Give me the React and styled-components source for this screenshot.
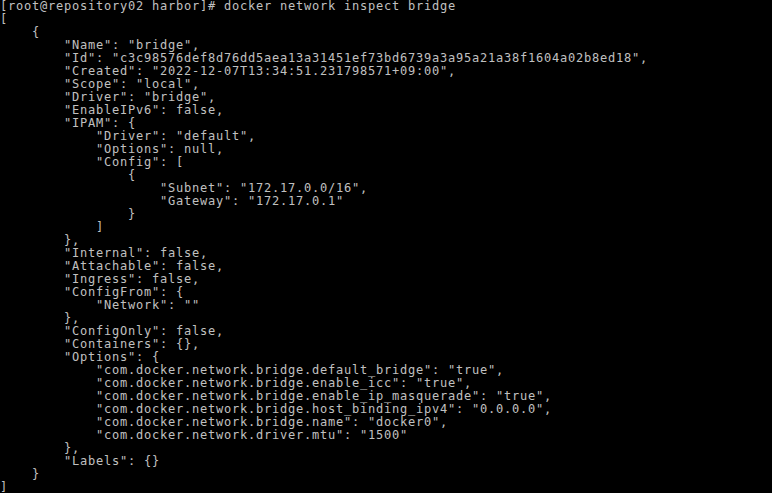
import React from "react";
import styled, { createGlobalStyle } from "styled-components";

const GlobalStyle = createGlobalStyle`
  html, body {
    margin: 0;
    padding: 0;
    background: #000000;
  }
  body {
    width: 772px;
    height: 493px;
    overflow: hidden;
  }
`;

const Screen = styled.div`
  width: 772px;
  height: 493px;
  background: #000000;
  overflow: hidden;
  display: flex;
  flex-direction: column;
`;

const Line = styled.div`
  font-family: "DejaVu Sans Mono", monospace;
  font-size: 12px;
  letter-spacing: 0.776px;
  line-height: 13px;
  height: 13px;
  color: #c0c0c0;
  white-space: pre;
`;

const output = [
  "[root@repository02 harbor]# docker network inspect bridge",
  "[",
  "    {",
  '        "Name": "bridge",',
  '        "Id": "c3c98576def8d76dd5aea13a31451ef73bd6739a3a95a21a38f1604a02b8ed18",',
  '        "Created": "2022-12-07T13:34:51.231798571+09:00",',
  '        "Scope": "local",',
  '        "Driver": "bridge",',
  '        "EnableIPv6": false,',
  '        "IPAM": {',
  '            "Driver": "default",',
  '            "Options": null,',
  '            "Config": [',
  "                {",
  '                    "Subnet": "172.17.0.0/16",',
  '                    "Gateway": "172.17.0.1"',
  "                }",
  "            ]",
  "        },",
  '        "Internal": false,',
  '        "Attachable": false,',
  '        "Ingress": false,',
  '        "ConfigFrom": {',
  '            "Network": ""',
  "        },",
  '        "ConfigOnly": false,',
  '        "Containers": {},',
  '        "Options": {',
  '            "com.docker.network.bridge.default_bridge": "true",',
  '            "com.docker.network.bridge.enable_icc": "true",',
  '            "com.docker.network.bridge.enable_ip_masquerade": "true",',
  '            "com.docker.network.bridge.host_binding_ipv4": "0.0.0.0",',
  '            "com.docker.network.bridge.name": "docker0",',
  '            "com.docker.network.driver.mtu": "1500"',
  "        },",
  '        "Labels": {}',
  "    }",
  "]",
];

export default function App() {
  return (
    <>
      <GlobalStyle />
      <Screen>
        {output.map((text, i) => (
          <Line key={i}>{text}</Line>
        ))}
      </Screen>
    </>
  );
}
